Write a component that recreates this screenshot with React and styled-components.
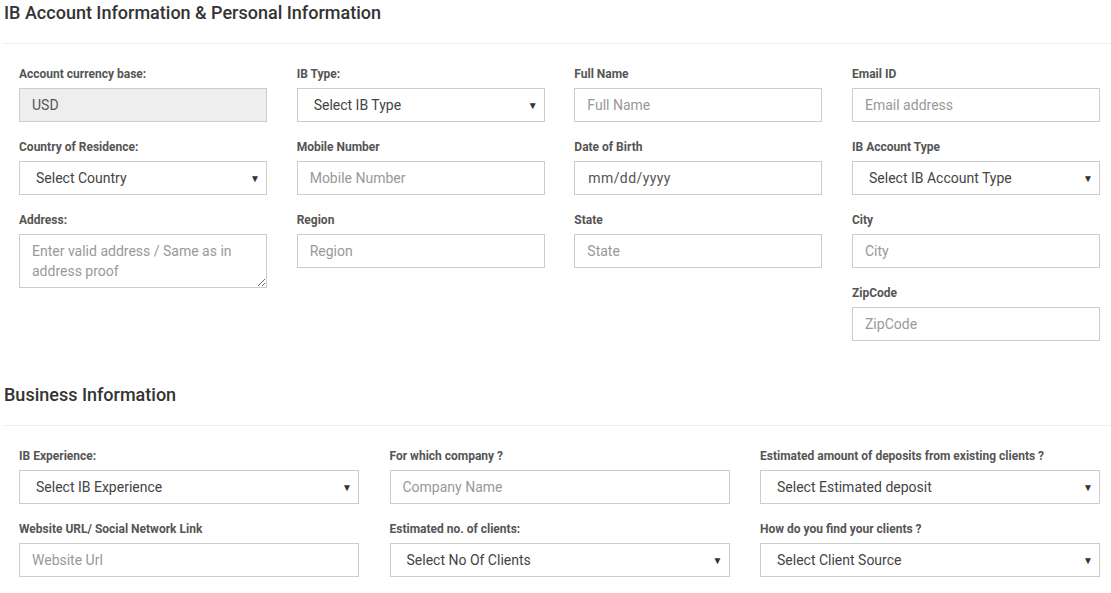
import styled, { createGlobalStyle } from 'styled-components';

const GlobalStyle = createGlobalStyle`
    body {
        margin: 0;
        background: #fff;
        font-family: Roboto, "Liberation Sans", Arial, sans-serif;
        color: #333;
    }
`;

const personal = [
    { label: 'Account currency base:', kind: 'readonly', value: 'USD' },
    { label: 'IB Type:', kind: 'select', value: 'Select IB Type' },
    { label: 'Full Name', kind: 'input', value: 'Full Name' },
    { label: 'Email ID', kind: 'input', value: 'Email address' },
    { label: 'Country of Residence:', kind: 'select', value: 'Select Country' },
    { label: 'Mobile Number', kind: 'input', value: 'Mobile Number' },
    { label: 'Date of Birth', kind: 'date', value: 'mm/dd/yyyy' },
    { label: 'IB Account Type', kind: 'select', value: 'Select IB Account Type' },
    { label: 'Address:', kind: 'textarea', value: 'Enter valid address / Same as in address proof' },
    { label: 'Region', kind: 'input', value: 'Region' },
    { label: 'State', kind: 'input', value: 'State' },
    { label: 'City', kind: 'input', value: 'City' },
    { label: 'ZipCode', kind: 'input', value: 'ZipCode', col: 4 },
];

const business = [
    { label: 'IB Experience:', kind: 'select', value: 'Select IB Experience' },
    { label: 'For which company ?', kind: 'input', value: 'Company Name' },
    { label: 'Estimated amount of deposits from existing clients ?', kind: 'select', value: 'Select Estimated deposit' },
    { label: 'Website URL/ Social Network Link', kind: 'input', value: 'Website Url' },
    { label: 'Estimated no. of clients:', kind: 'select', value: 'Select No Of Clients' },
    { label: 'How do you find your clients ?', kind: 'select', value: 'Select Client Source' },
];

function Control({ kind, value }) {
    if (kind === 'select') {
        return (
            <SelectWrap>
                <Select defaultValue="">
                    <option value="">{value}</option>
                </Select>
                <Arrow>▼</Arrow>
            </SelectWrap>
        );
    }
    if (kind === 'textarea') return <TextArea placeholder={value} />;
    if (kind === 'readonly') return <Input readOnly defaultValue={value} $disabled />;
    if (kind === 'date') return <Input readOnly defaultValue={value} $date />;
    return <Input placeholder={value} />;
}

function Section({ title, fields, cols, first }) {
    return (
        <Block $first={first}>
            <Heading>{title}</Heading>
            <Grid $cols={cols}>
                {fields.map((f) => (
                    <Field key={f.label} $col={f.col} $tall={f.kind === 'textarea'}>
                        <Label>{f.label}</Label>
                        <Control kind={f.kind} value={f.value} />
                    </Field>
                ))}
            </Grid>
        </Block>
    );
}

export default function App() {
    return (
        <Page>
            <GlobalStyle />
            <Section first title="IB Account Information & Personal Information" fields={personal} cols={4} />
            <Section title="Business Information" fields={business} cols={3} />
        </Page>
    );
}

const Page = styled.div`
    width: 1111px;
    overflow: hidden;
`;

const Block = styled.section`
    padding-top: ${(p) => (p.$first ? '3px' : '44px')};
`;

const Heading = styled.h3`
    margin: 0 0 0 4px;
    padding: 0 0 20px 0;
    font-size: 18px;
    line-height: 20px;
    font-weight: 500;
    color: #333;
    border-bottom: 1px solid #eee;
`;

const Grid = styled.div`
    display: grid;
    grid-template-columns: repeat(${(p) => p.$cols}, 1fr);
    column-gap: ${(p) => (p.$cols === 4 ? '29.67px' : '30.5px')};
    row-gap: 17px;
    margin: 0 11px 0 19px;
    padding-top: 22px;
`;

const Field = styled.div`
    display: flex;
    flex-direction: column;
    grid-column: ${(p) => p.$col || 'auto'};
    margin-bottom: ${(p) => (p.$tall ? '-20px' : '0')};
`;

const Label = styled.label`
    font-size: 12px;
    line-height: 17px;
    font-weight: 700;
    color: #555;
    margin-bottom: 5px;
`;

const Input = styled.input`
    box-sizing: border-box;
    height: 34px;
    width: 100%;
    padding: 6px ${(p) => (p.$date ? '13px' : '12px')};
    border: 1px solid #ccc;
    border-radius: 0;
    background: ${(p) => (p.$disabled ? '#eee' : '#fff')};
    font: 14px Roboto, "Liberation Sans", Arial, sans-serif;
    letter-spacing: ${(p) => (p.$date ? '0.4px' : 'normal')};
    color: #555;
    outline: none;

    &::placeholder {
        color: #999;
    }
`;

const TextArea = styled.textarea`
    box-sizing: border-box;
    height: 54px;
    width: 100%;
    padding: 6px 12px;
    border: 1px solid #ccc;
    border-radius: 0;
    font: 14px/20px Roboto, "Liberation Sans", Arial, sans-serif;
    color: #555;
    outline: none;
    resize: vertical;

    &::placeholder {
        color: #999;
    }
`;

const SelectWrap = styled.div`
    position: relative;
`;

const Select = styled.select`
    box-sizing: border-box;
    appearance: none;
    height: 34px;
    width: 100%;
    padding: 6px 24px 6px 16px;
    border: 1px solid #ccc;
    border-radius: 0;
    background: #fff;
    font: 14px Roboto, "Liberation Sans", Arial, sans-serif;
    color: #444;
    outline: none;
`;

const Arrow = styled.span`
    position: absolute;
    right: 7px;
    top: 50%;
    transform: translateY(-50%);
    font-size: 10px;
    color: #333;
    pointer-events: none;
`;
